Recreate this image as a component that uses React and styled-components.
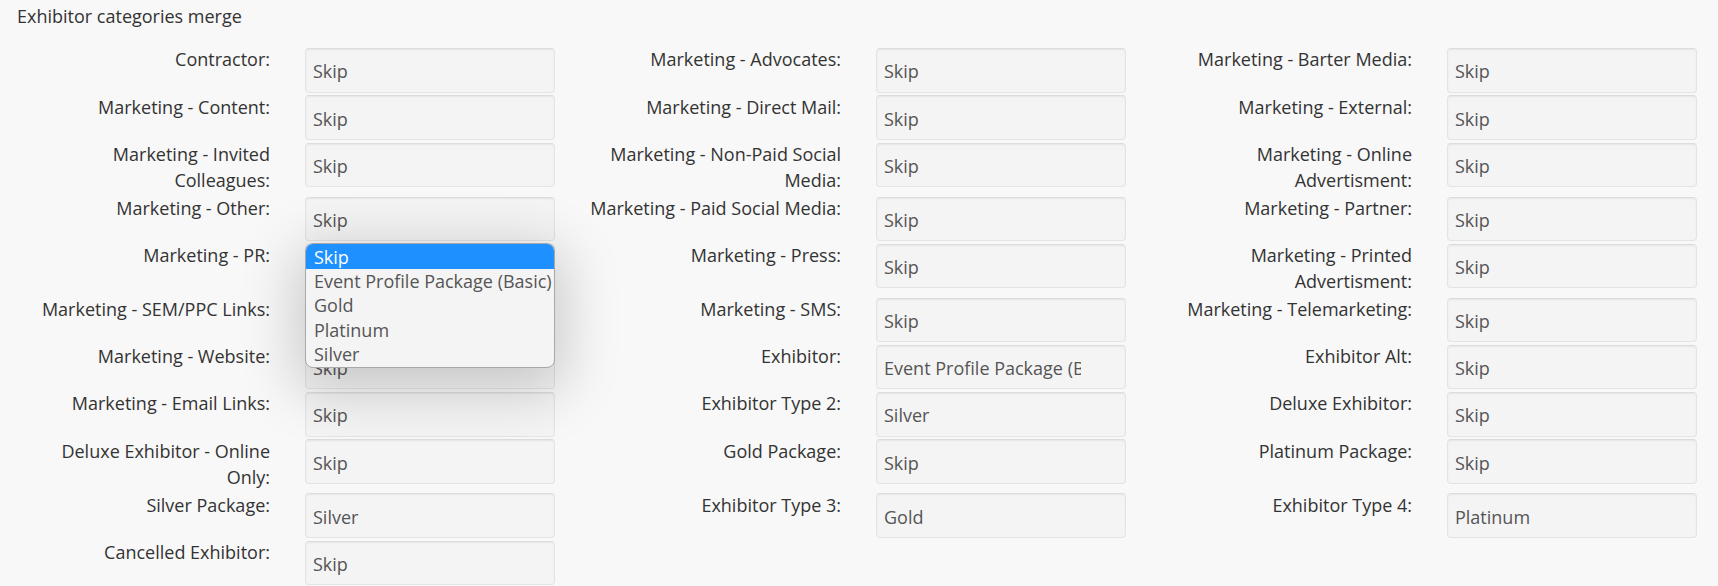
import React from 'react';
import styled, { createGlobalStyle } from 'styled-components';

const GlobalStyle = createGlobalStyle`
  html, body {
    margin: 0;
    background: #f8f8f8;
  }
  body {
    font-family: 'Open Sans', 'Liberation Sans', sans-serif;
    font-size: 18px;
    line-height: 1.5;
    color: #333;
  }
`;

const Page = styled.div`
  padding: 2.8px 17px 0;
`;

const Title = styled.div`
  color: #333;
  margin-bottom: 16.6px;
`;

const Grid = styled.div`
  display: grid;
  grid-template-columns: repeat(3, 288px 283px);
  row-gap: 1px;
  align-items: start;
`;

const Label = styled.label`
  text-align: right;
  padding-right: 35px;
  line-height: 26.5px;
`;

const Field = styled.div`
  position: relative;
  width: 250px;
  margin-top: 1.8px;
`;

const Box = styled.div`
  box-sizing: border-box;
  height: 44.4px;
  padding: 9.2px 44px 0 7px;
  background: #f4f4f4;
  border: 1px solid #e4e4e4;
  border-top-color: #dcdcdc;
  border-radius: 4px;
  box-shadow: inset 0 1px 2px rgba(0, 0, 0, 0.06);
  color: #555;
`;

const Value = styled.div`
  white-space: nowrap;
  overflow: hidden;
`;

const Popup = styled.ul`
  position: absolute;
  top: -0.6px;
  left: 0;
  width: 100%;
  box-sizing: border-box;
  margin: 0;
  padding: 0;
  list-style: none;
  background: #f4f4f4;
  border: 1.5px solid #a8a8a8;
  border-radius: 8px;
  overflow: hidden;
  box-shadow: 0 14px 55px 10px rgba(0, 0, 0, 0.18);
  z-index: 2;
`;

const Option = styled.li`
  padding-left: 8px;
  line-height: 24.4px;
  white-space: nowrap;
  color: ${({ $active }) => ($active ? '#fff' : '#555')};
  background: ${({ $active }) => ($active ? '#1e90ff' : 'transparent')};
  ${({ $active }) => $active && 'padding-top: 0.5px;'}
`;

const OPTIONS = ['Skip', 'Event Profile Package (Basic)', 'Gold', 'Platinum', 'Silver'];

const ROWS = [
  [['Contractor', 'Skip'], ['Marketing - Advocates', 'Skip'], ['Marketing - Barter Media', 'Skip']],
  [['Marketing - Content', 'Skip'], ['Marketing - Direct Mail', 'Skip'], ['Marketing - External', 'Skip']],
  [
    ['Marketing - Invited Colleagues', 'Skip'],
    ['Marketing - Non-Paid Social Media', 'Skip'],
    ['Marketing - Online Advertisment', 'Skip'],
  ],
  [['Marketing - Other', 'Skip'], ['Marketing - Paid Social Media', 'Skip'], ['Marketing - Partner', 'Skip']],
  [['Marketing - PR', 'Skip', true], ['Marketing - Press', 'Skip'], ['Marketing - Printed Advertisment', 'Skip']],
  [['Marketing - SEM/PPC Links', 'Skip'], ['Marketing - SMS', 'Skip'], ['Marketing - Telemarketing', 'Skip']],
  [['Marketing - Website', 'Skip'], ['Exhibitor', 'Event Profile Package (Basic)'], ['Exhibitor Alt', 'Skip']],
  [['Marketing - Email Links', 'Skip'], ['Exhibitor Type 2', 'Silver'], ['Deluxe Exhibitor', 'Skip']],
  [['Deluxe Exhibitor - Online Only', 'Skip'], ['Gold Package', 'Skip'], ['Platinum Package', 'Skip']],
  [['Silver Package', 'Silver'], ['Exhibitor Type 3', 'Gold'], ['Exhibitor Type 4', 'Platinum']],
  [['Cancelled Exhibitor', 'Skip']],
];

const MergeSelect = ({ value, open }) => (
  <Field>
    <Box>
      <Value>{value}</Value>
    </Box>
    {open && (
      <Popup>
        {OPTIONS.map((opt) => (
          <Option key={opt} $active={opt === value}>
            {opt}
          </Option>
        ))}
      </Popup>
    )}
  </Field>
);

export default function App() {
  return (
    <>
      <GlobalStyle />
      <Page>
        <Title>Exhibitor categories merge</Title>
        <Grid>
          {ROWS.flat().map(([label, value, open]) => (
            <React.Fragment key={label}>
              <Label>{label}:</Label>
              <MergeSelect value={value} open={open} />
            </React.Fragment>
          ))}
        </Grid>
      </Page>
    </>
  );
}
